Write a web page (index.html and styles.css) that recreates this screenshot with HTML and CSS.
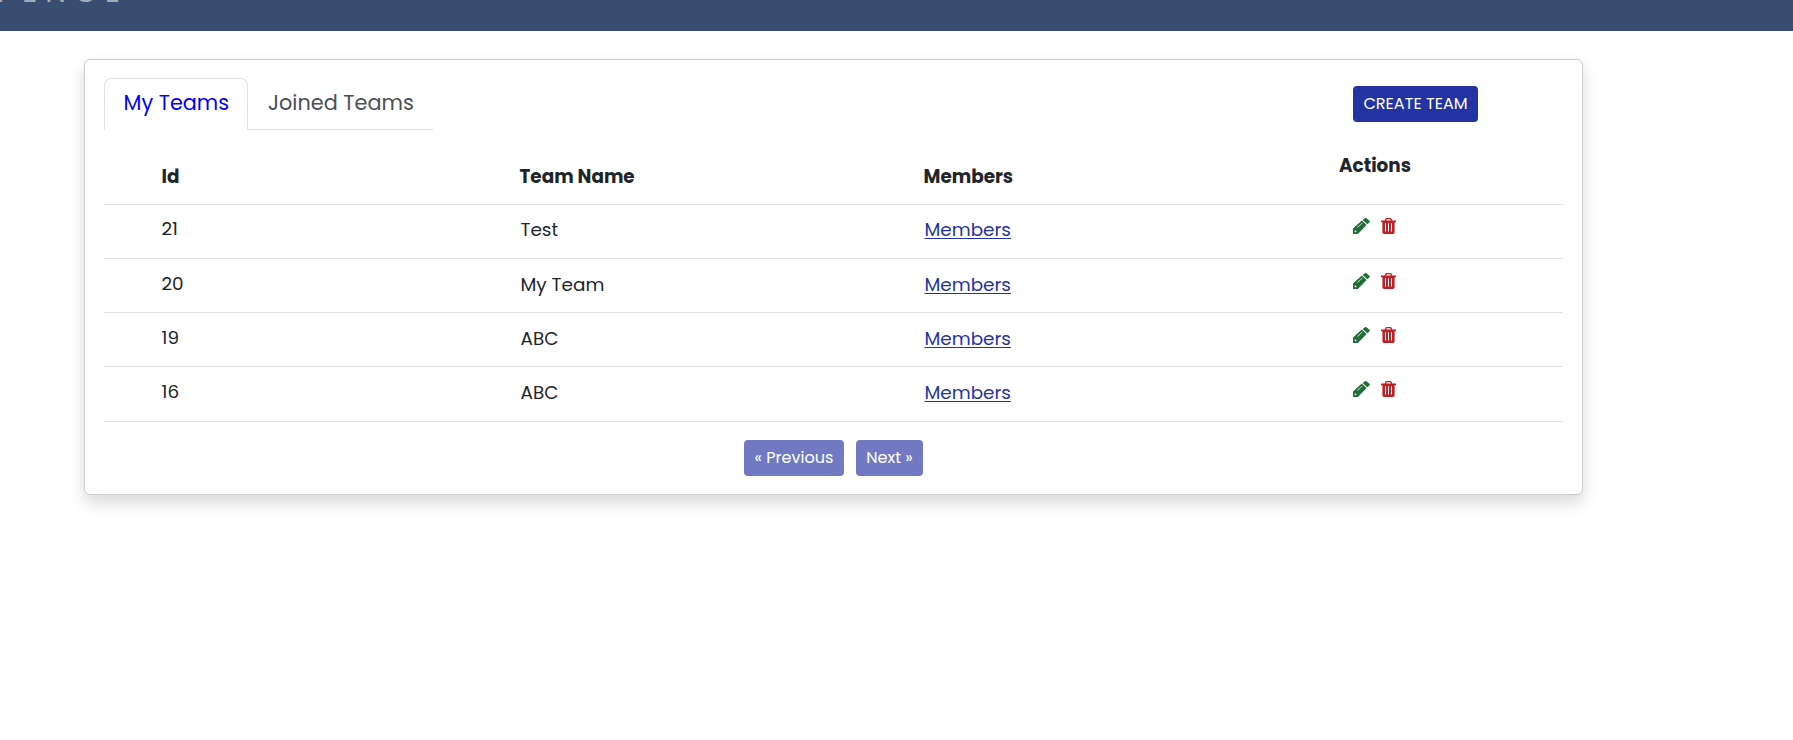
FILE: index.html
```html
<!DOCTYPE html>
<html lang="en">
<head>
<meta charset="utf-8">
<title>Teams</title>
<link rel="stylesheet" href="styles.css">
</head>
<body>
<svg class="sprite" aria-hidden="true">
  <symbol id="pencil" viewBox="0 0 17 16">
    <path fill-rule="evenodd" d="M0 16V10.6L8.8 2.6l4.8 4.4L4.9 16zM2 12.2 3.6 13.6 2.8 14.4 1.4 13.2zM4.2 9.3 9.2 4.7l.4.4-5 4.6zM9.7 2 11.9.3q.8-.6 1.6 0l2.9 2.5q.8.8 0 1.6L14.3 6.3z"/>
  </symbol>
  <symbol id="trash" viewBox="0 0 15 16">
    <path fill-rule="evenodd" d="M0 3V2.4H3.7L4.4.8Q4.8 0 5.6 0H9.4Q10.2 0 10.6.8l.7 1.6H15V4.2H13.6V14.3Q13.6 16 12 16H3Q1.4 16 1.4 14.3V4.2H0zM5.2 2.4H9.8L9.3 1.3H5.7zM4 5.2V13.5H5V5.2zM7 5.2V13.5H8V5.2zM10 5.2V13.5H11V5.2z"/>
  </symbol>
</svg>
<header class="navbar"><span class="brand">PENCE</span></header>
<main class="card">
  <div class="toolbar">
    <nav class="tabs"><a class="tab active">My Teams</a><a class="tab joined">Joined Teams</a></nav>
    <button class="btn create">CREATE TEAM</button>
  </div>
  <section class="table">
    <div class="row head"><b>Id</b><b>Team Name</b><b>Members</b><b class="h-actions">Actions</b></div>
    <div class="row"><span class="id">21</span><span class="name">Test</span><a class="members">Members</a><span class="actions"><svg class="pencil"><use href="#pencil"/></svg><svg class="trash"><use href="#trash"/></svg></span></div>
    <div class="row"><span class="id">20</span><span class="name">My Team</span><a class="members">Members</a><span class="actions"><svg class="pencil"><use href="#pencil"/></svg><svg class="trash"><use href="#trash"/></svg></span></div>
    <div class="row"><span class="id">19</span><span class="name">ABC</span><a class="members">Members</a><span class="actions"><svg class="pencil"><use href="#pencil"/></svg><svg class="trash"><use href="#trash"/></svg></span></div>
    <div class="row"><span class="id">16</span><span class="name">ABC</span><a class="members">Members</a><span class="actions"><svg class="pencil"><use href="#pencil"/></svg><svg class="trash"><use href="#trash"/></svg></span></div>
  </section>
  <footer class="pager"><button class="btn prev">« Previous</button><button class="btn next">Next »</button></footer>
</main>
</body>
</html>
```
FILE: styles.css
```css
* { box-sizing: border-box; }
body { margin: 0; min-height: 100vh; background: #fff; color: #212529; font-family: Poppins, Inter, sans-serif; }
.sprite { display: none; }
.navbar { height: 31px; background: #384d6f; overflow: hidden; }
.brand { display: block; margin: -26px 0 0 -3px; font-size: 29.5px; line-height: 35px; letter-spacing: 8px; color: #a0acbc; }
.card { width: 1499px; height: 436px; margin: 28px 0 0 84px; padding: 18px 19px; border: 1px solid #cbcccd; border-radius: 6px; box-shadow: 0 8px 16px rgba(0,0,0,.15); }
.toolbar { display: flex; justify-content: space-between; align-items: flex-start; height: 73px; }
.tabs { display: flex; width: 329px; height: 52px; border-bottom: 1px solid #dee2e6; }
.tab { height: 52px; padding: 0 0 0 20px; font-size: 20.8px; line-height: 50px; color: #495057; white-space: nowrap; }
.tab.active { width: 144px; padding-left: 18.5px; border: 1px solid #dee2e6; border-bottom-color: #fff; border-radius: 7px 7px 0 0; line-height: 48px; color: #00f; background: #fff; }
.btn { height: 36px; padding: 0; border: 0; border-radius: 4px; background: #2333a2; color: #fff; font: 16.1px/34px Poppins, Inter, sans-serif; white-space: nowrap; text-align: center; }
.create { width: 125px; margin: 8px 85px 0 0; padding-bottom: 1px; }
.row { display: grid; grid-template-columns: 358px 404px 415.5px 1fr; height: 54.15px; padding-left: 57.5px; border-bottom: 1px solid #dee2e6; font-size: 18.4px; line-height: 24px; }
.row.head { height: 54px; padding-top: 13.5px; }
.h-actions { margin-top: -11px; }
.id { padding-top: 12.4px; }
.name, .members { padding-top: 13.4px; }
.name { padding-left: 1px; }
.members { padding-left: 1px; color: #2333a2; text-decoration: underline; text-decoration-thickness: 1px; text-underline-offset: 1.5px; }
.actions { display: flex; gap: 11px; padding: 13.4px 0 0 13.8px; }
.pencil { width: 17px; height: 16px; fill: #216e36; }
.trash { width: 15px; height: 16px; fill: #bd2025; }
.pager { display: flex; justify-content: center; gap: 12px; padding-top: 18px; }
.pager .btn { background: #7079c2; }
.prev { width: 100px; }
.next { width: 67px; }
```
